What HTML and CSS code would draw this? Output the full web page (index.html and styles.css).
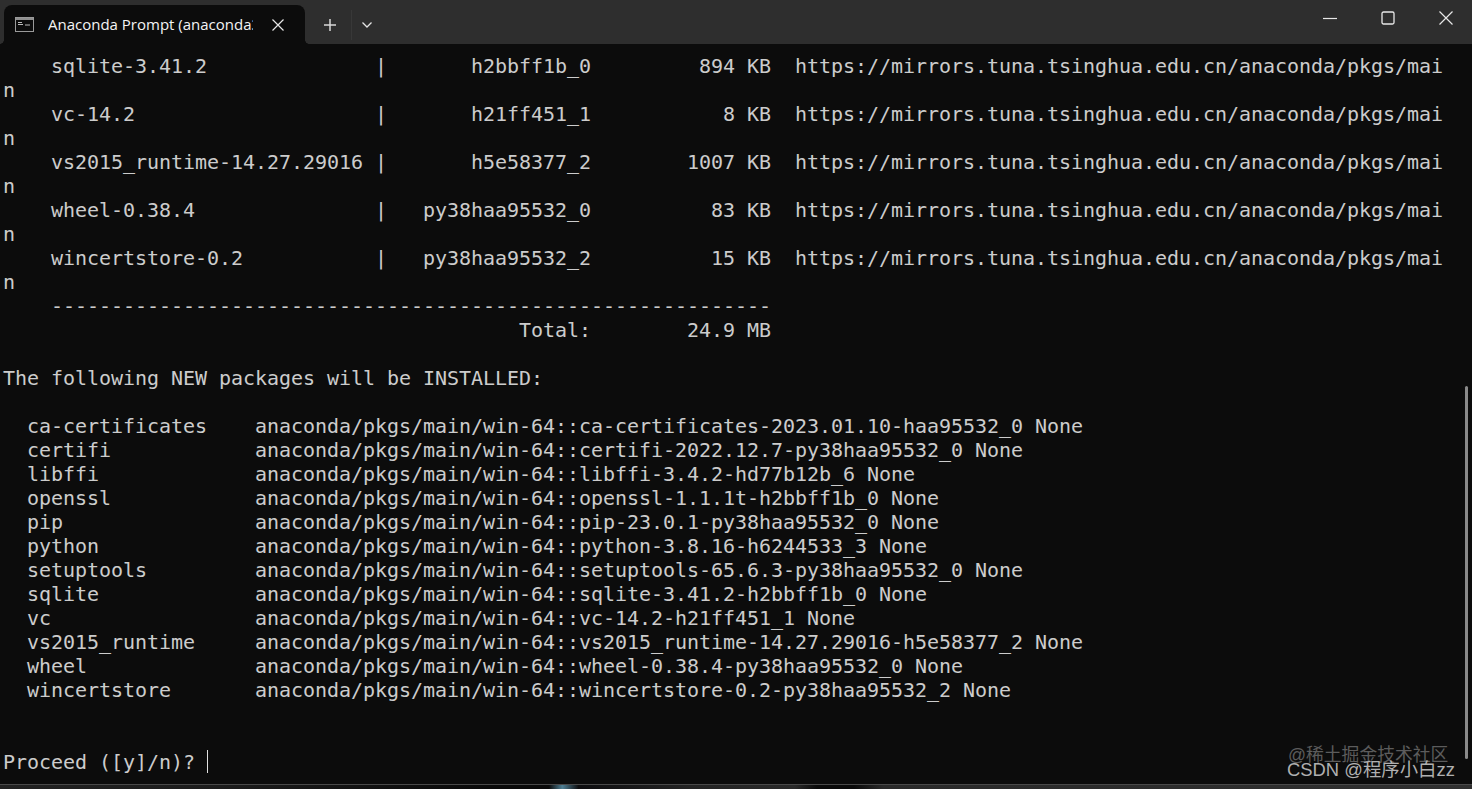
FILE: index.html
```
<!DOCTYPE html>
<html lang="en">
<head>
<meta charset="utf-8">
<title>Anaconda Prompt</title>
<link rel="stylesheet" href="styles.css">
</head>
<body>
<div class="window">
  <header class="titlebar">
    <div class="tab">
      <svg class="tab-icon" width="20" height="16" viewBox="0 0 20 16"><rect x="0.5" y="0.5" width="18" height="14" fill="#0c0c0c" stroke="#9a9a9a"/><rect x="1" y="1" width="17" height="2" fill="#8f8f8f"/><path d="M3 5.5h4M3 7.5h5M10 8h5" stroke="#bbb" stroke-width="1"/></svg>
      <span class="tab-title">Anaconda Prompt (anaconda3</span>
      <svg class="tab-close" width="14" height="14" viewBox="0 0 14 14"><path d="M1.5 1.5l11 11M12.5 1.5l-11 11" stroke="#e6e6e6" stroke-width="1.2" fill="none"/></svg>
    </div>
    <div class="tab-actions">
      <button class="tab-btn plus"><svg width="14" height="14" viewBox="0 0 14 14"><path d="M7 1v12M1 7h12" stroke="#d8d8d8" stroke-width="1.5"/></svg></button>
      <span class="sep"></span>
      <button class="tab-btn chevron"><svg width="12" height="8" viewBox="0 0 12 8"><path d="M1.5 1.5L6 6l4.5-4.5" stroke="#e4e4e4" stroke-width="1.3" fill="none"/></svg></button>
    </div>
    <div class="window-controls">
      <button class="win-btn"><svg width="14" height="14" viewBox="0 0 14 14"><path d="M0 7.5h14" stroke="#e8e8e8" stroke-width="1.2"/></svg></button>
      <button class="win-btn"><svg width="14" height="14" viewBox="0 0 14 14"><rect x="1" y="1" width="12" height="12" rx="1.5" stroke="#e8e8e8" stroke-width="1.3" fill="none"/></svg></button>
      <button class="win-btn"><svg width="14" height="14" viewBox="0 0 14 14"><path d="M0.5 0.5l13 13M13.5 0.5l-13 13" stroke="#e8e8e8" stroke-width="1.2"/></svg></button>
    </div>
  </header>
  <main class="terminal">
<pre class="output">    sqlite-3.41.2              |       h2bbff1b_0         894 KB  https://mirrors.tuna.tsinghua.edu.cn/anaconda/pkgs/mai
n
    vc-14.2                    |       h21ff451_1           8 KB  https://mirrors.tuna.tsinghua.edu.cn/anaconda/pkgs/mai
n
    vs2015_runtime-14.27.29016 |       h5e58377_2        1007 KB  https://mirrors.tuna.tsinghua.edu.cn/anaconda/pkgs/mai
n
    wheel-0.38.4               |   py38haa95532_0          83 KB  https://mirrors.tuna.tsinghua.edu.cn/anaconda/pkgs/mai
n
    wincertstore-0.2           |   py38haa95532_2          15 KB  https://mirrors.tuna.tsinghua.edu.cn/anaconda/pkgs/mai
n
    ------------------------------------------------------------
                                           Total:        24.9 MB

The following NEW packages will be INSTALLED:

  ca-certificates    anaconda/pkgs/main/win-64::ca-certificates-2023.01.10-haa95532_0 None
  certifi            anaconda/pkgs/main/win-64::certifi-2022.12.7-py38haa95532_0 None
  libffi             anaconda/pkgs/main/win-64::libffi-3.4.2-hd77b12b_6 None
  openssl            anaconda/pkgs/main/win-64::openssl-1.1.1t-h2bbff1b_0 None
  pip                anaconda/pkgs/main/win-64::pip-23.0.1-py38haa95532_0 None
  python             anaconda/pkgs/main/win-64::python-3.8.16-h6244533_3 None
  setuptools         anaconda/pkgs/main/win-64::setuptools-65.6.3-py38haa95532_0 None
  sqlite             anaconda/pkgs/main/win-64::sqlite-3.41.2-h2bbff1b_0 None
  vc                 anaconda/pkgs/main/win-64::vc-14.2-h21ff451_1 None
  vs2015_runtime     anaconda/pkgs/main/win-64::vs2015_runtime-14.27.29016-h5e58377_2 None
  wheel              anaconda/pkgs/main/win-64::wheel-0.38.4-py38haa95532_0 None
  wincertstore       anaconda/pkgs/main/win-64::wincertstore-0.2-py38haa95532_2 None


Proceed ([y]/n)? <span class="cursor"></span></pre>
    <div class="scrollbar"></div>
    <div class="watermark">
      <div class="wm-juejin">@稀土掘金技术社区</div>
      <div class="wm-csdn">CSDN @程序小白zz</div>
    </div>
  </main>
  <div class="desktop-strip"></div>
</div>
</body>
</html>
```
FILE: styles.css
```
* { box-sizing: border-box; }
html, body { margin: 0; height: 100%; background: #0c0c0c; overflow: hidden; }
.window { height: 789px; display: flex; flex-direction: column; }
.titlebar { height: 44px; flex: none; background: #2e2e2e; display: flex; align-items: flex-end; padding-left: 4px; }
.tab { position: relative; width: 301px; height: 39px; background: #0c0c0c; border-radius: 8px 8px 0 0; display: flex; align-items: center; padding-left: 11px; }
.tab::before, .tab::after { content: ""; position: absolute; bottom: 0; width: 4px; height: 4px; }
.tab::before { left: -4px; background: radial-gradient(circle at 0 0, transparent 3.5px, #0c0c0c 4px); }
.tab::after { right: -4px; background: radial-gradient(circle at 100% 0, transparent 3.5px, #0c0c0c 4px); }
.tab-icon { flex: none; }
.tab-title { width: 205px; margin: 0 0 2px 13px; overflow: hidden; white-space: nowrap; font: 500 15px "Open Sans", "Noto Sans", sans-serif; color: #f4f4f4; }
.tab-close { margin-left: 18px; flex: none; }
.tab-actions { display: flex; align-items: center; height: 39px; }
.tab-btn { border: 0; background: none; padding: 0; display: flex; align-items: center; justify-content: center; }
.plus { width: 42px; margin-left: 4px; }
.sep { width: 1px; height: 30px; background: #383838; }
.chevron { width: 30px; }
.window-controls { margin-left: auto; display: flex; align-self: flex-start; }
.win-btn { width: 58px; height: 36px; border: 0; background: none; padding: 0 0 0 5px; display: flex; align-items: center; justify-content: center; }
.terminal { position: relative; flex: 1; background: #0c0c0c; padding: 10px 0 0 3px; border-bottom: 1px solid #4a4a4a; overflow: hidden; }
.output { margin: 0; font: 20px/24px "DejaVu Sans Mono", "Liberation Mono", monospace; letter-spacing: -0.04px; color: #cccccc; }
.cursor { display: inline-block; width: 1px; height: 23px; background: #e0e0e0; vertical-align: -4px; }
.scrollbar { position: absolute; right: 4px; top: 342px; width: 3px; height: 373px; border-radius: 2px; background: #8a8a8a; }
.watermark { position: absolute; left: 1287px; top: 702px; font-family: "Liberation Sans", "Noto Sans CJK SC", sans-serif; line-height: 18px; white-space: nowrap; }
.wm-juejin { color: #5c5c5c; font-size: 17.8px; margin-left: 1px; }
.wm-csdn { color: #b0b0b0; font-size: 18.4px; margin-top: -3px; }
.desktop-strip { height: 4px; flex: none; background: linear-gradient(90deg, #222 0, #1c1c1c 15%, #0a0a0a 33%, #0a0a0a 37.3%, #4f7f94 38.2%, #0e0e10 39.3%, #242424 47%, #2a2a2a 54%, #0a0a0a 55.5%, #0a0a0a 58%, #2a2a2a 60%, #303030 100%); }
```
